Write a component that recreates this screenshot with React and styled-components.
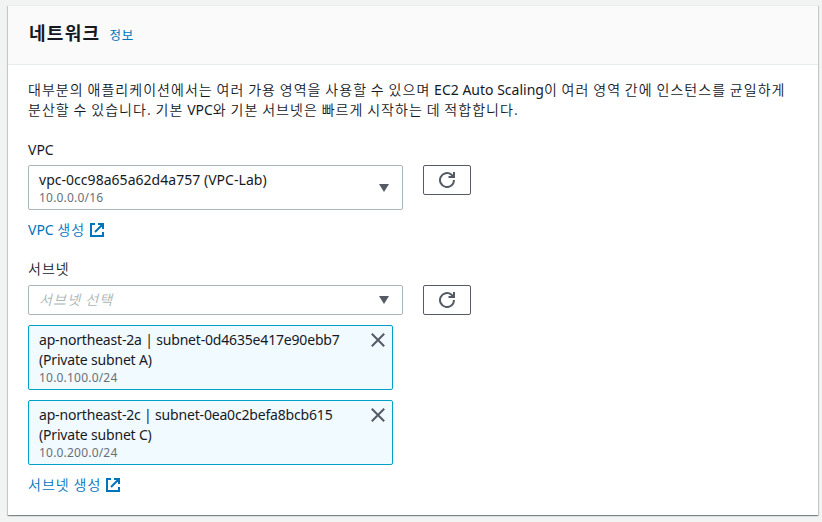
import React from "react";
import styled, { createGlobalStyle } from "styled-components";

const GlobalStyle = createGlobalStyle`
  *, *::before, *::after { box-sizing: border-box; }
  body {
    margin: 0;
    background: #f2f3f3;
    color: #16191f;
    font: 14px/20px "Noto Sans", "Noto Sans CJK KR", sans-serif;
  }
`;

const Page = styled.main`
  height: 522px;
  padding: 5px 4px 0 8px;
  overflow: hidden;
`;

const Card = styled.section`
  height: 510px;
  background: #fff;
  border-top: 1px solid #eaeded;
  box-shadow: 0 1px 1px 0 rgba(0, 28, 36, 0.3), 1px 1px 1px 0 rgba(0, 28, 36, 0.15),
    -1px 1px 1px 0 rgba(0, 28, 36, 0.15);
`;

const Header = styled.header`
  display: flex;
  align-items: baseline;
  gap: 9px;
  height: 59px;
  padding: 16px 21px 0;
  background: #fafafa;
  border-bottom: 1px solid #eaeded;
`;

const Title = styled.h2`
  margin: 0;
  font-size: 18px;
  line-height: 22px;
  font-weight: 700;
  letter-spacing: 1.3px;
`;

const InfoLink = styled.a`
  padding-top: 1px;
  color: #0073bb;
  font-size: 12.5px;
  letter-spacing: 0.8px;
`;

const Body = styled.div`
  padding: 15px 20px;
`;

const Description = styled.p`
  margin: 0 0 20px;
  white-space: nowrap;
`;

const Latin = styled.span`
  letter-spacing: ${(p) => p.$spacing ?? 0}px;
  white-space: pre;
`;

const Hangul = styled.span`
  padding-bottom: 2px;
  font-family: "Noto Sans CJK KR", sans-serif;
  font-weight: 350;
  line-height: 1;
  letter-spacing: 1.04px;
  word-spacing: -0.38px;
  white-space: pre;
`;

const Field = styled.div`
  display: flex;
  flex-direction: column;
  align-items: flex-start;
  margin-bottom: ${(p) => p.$after ?? 0}px;
`;

const Label = styled.div`
  height: 20px;
  margin-bottom: ${(p) => p.$gap ?? 5}px;
`;

const ControlRow = styled.div`
  display: flex;
  align-items: flex-start;
  gap: 20px;
`;

const Select = styled.div`
  display: flex;
  align-items: center;
  justify-content: space-between;
  width: 375px;
  height: ${(p) => p.$height}px;
  padding: 0 12px 0 10px;
  border: 1px solid #aab7b8;
  border-radius: 2px;
  background: #fff;
`;

const Option = styled.div`
  display: flex;
  flex-direction: column;
`;

const Cidr = styled.span`
  color: #687078;
  font-size: 12px;
  line-height: 15px;
  letter-spacing: 0.2px;
`;

const Placeholder = styled(Hangul)`
  color: #aab7b8;
  font-style: italic;
  letter-spacing: 1.2px;
`;

const RefreshButton = styled.button`
  display: flex;
  align-items: center;
  justify-content: center;
  width: 48px;
  height: 30px;
  padding: 0;
  border: 1px solid #545b64;
  border-radius: 2px;
  background: #fff;
`;

const Tokens = styled.div`
  display: flex;
  flex-direction: column;
  gap: 10px;
  margin-top: 10px;
`;

const Token = styled.div`
  display: flex;
  justify-content: space-between;
  width: 365px;
  height: 65px;
  padding: 4px 7px 0 10px;
  border: 1px solid #00a1c9;
  border-radius: 2px;
  background: #f1faff;
`;

const Dismiss = styled.button`
  display: flex;
  width: 14px;
  height: 14px;
  margin-top: 3px;
  padding: 0;
  border: 0;
  background: none;
`;

const CreateLink = styled.a`
  display: flex;
  align-items: center;
  gap: 5px;
  height: 20px;
  margin-top: 10px;
  color: #0073bb;
`;

const Caret = () => (
  <svg width="12" height="8" viewBox="0 0 12 8">
    <path d="M1 0h10L6 8z" fill="#545b64" />
  </svg>
);

const RefreshIcon = () => (
  <svg width="16" height="16" viewBox="0 0 16 16" fill="none" stroke="#545b64" strokeWidth="2">
    <path d="M15 8A7 7 0 1 1 12.5 2.7L14.5 4.5" />
    <path d="M15 0v5h-5.5" />
  </svg>
);

const CloseIcon = () => (
  <svg width="14" height="14" viewBox="0 0 14 14" fill="none" stroke="#545b64" strokeWidth="2">
    <path d="M.8.8l12.4 12.4M13.2.8L.8 13.2" />
  </svg>
);

const ExternalIcon = () => (
  <svg width="14" height="14" viewBox="0 0 14 14" fill="none" stroke="#0073bb" strokeWidth="2">
    <path d="M5 1H1v12h12V9M8 1h5v5M13 1L5 9" />
  </svg>
);

const Refresh = () => (
  <RefreshButton aria-label="새로 고침">
    <RefreshIcon />
  </RefreshButton>
);

const subnets = [
  { name: "ap-northeast-2a | subnet-0d4635e417e90ebb7", label: "(Private subnet A)", cidr: "10.0.100.0/24" },
  { name: "ap-northeast-2c | subnet-0ea0c2befa8bcb615", label: "(Private subnet C)", cidr: "10.0.200.0/24" },
];

export default function App() {
  return (
    <Page>
      <GlobalStyle />
      <Card>
        <Header>
          <Title>네트워크</Title>
          <InfoLink>정보</InfoLink>
        </Header>
        <Body>
          <Description>
            <Hangul>대부분의 애플리케이션에서는 여러 가용 영역을 사용할 수 있으며 </Hangul>
            <Latin>EC2 Auto Scaling</Latin>
            <Hangul>이 여러 영역 간에 인스턴스를 균일하게</Hangul>
            <br />
            <Hangul>분산할 수 있습니다. 기본 </Hangul>
            <Latin>VPC</Latin>
            <Hangul>와 기본 서브넷은 빠르게 시작하는 데 적합합니다.</Hangul>
          </Description>
          <Field $after={19}>
            <Label><Latin>VPC</Latin></Label>
            <ControlRow>
              <Select $height={45}>
                <Option>
                  <Latin $spacing={0.03}>vpc-0cc98a65a62d4a757 (VPC-Lab)</Latin>
                  <Cidr>10.0.0.0/16</Cidr>
                </Option>
                <Caret />
              </Select>
              <Refresh />
            </ControlRow>
            <CreateLink>
              <span><Latin>VPC </Latin><Hangul>생성</Hangul></span>
              <ExternalIcon />
            </CreateLink>
          </Field>
          <Field>
            <Label $gap={6}><Hangul>서브넷</Hangul></Label>
            <ControlRow>
              <Select $height={30}>
                <Placeholder>서브넷 선택</Placeholder>
                <Caret />
              </Select>
              <Refresh />
            </ControlRow>
            <Tokens>
              {subnets.map((s) => (
                <Token key={s.name}>
                  <Option>
                    <Latin $spacing={-0.18}>{s.name}</Latin>
                    <Latin $spacing={-0.18}>{s.label}</Latin>
                    <Cidr>{s.cidr}</Cidr>
                  </Option>
                  <Dismiss aria-label="제거"><CloseIcon /></Dismiss>
                </Token>
              ))}
            </Tokens>
            <CreateLink>
              <Hangul>서브넷 생성</Hangul>
              <ExternalIcon />
            </CreateLink>
          </Field>
        </Body>
      </Card>
    </Page>
  );
}
